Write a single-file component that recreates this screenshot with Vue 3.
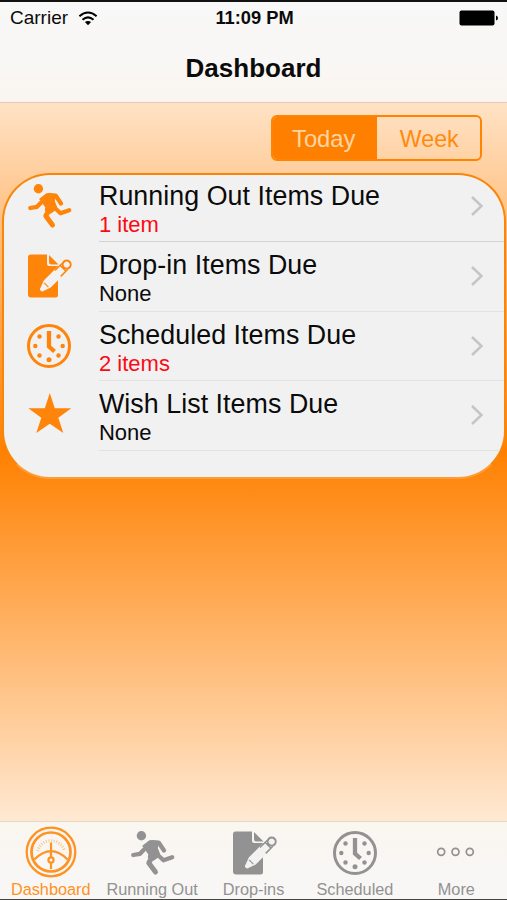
<script setup>
import { ref } from 'vue';

const range = ref('Today');
const activeTab = ref('Dashboard');

const items = [
  { title: 'Running Out Items Due', detail: '1 item', due: true, icon: 'run' },
  { title: 'Drop-in Items Due', detail: 'None', due: false, icon: 'note' },
  { title: 'Scheduled Items Due', detail: '2 items', due: true, icon: 'clock' },
  { title: 'Wish List Items Due', detail: 'None', due: false, icon: 'star' },
];

const tabs = [
  { name: 'Dashboard', icon: 'gauge' },
  { name: 'Running Out', icon: 'run' },
  { name: 'Drop-ins', icon: 'note' },
  { name: 'Scheduled', icon: 'clock' },
  { name: 'More', icon: 'more' },
];
</script>

<template>
  <div class="screen">
    <svg class="symbols" aria-hidden="true">
      <symbol id="run" viewBox="0 0 48 48">
        <circle cx="13.4" cy="6.7" r="4.7" fill="currentColor" />
        <path d="M15 17 21.5 12 31 12.5 29 19 32 26.5 25.5 31 20.5 28.5 21 25Z" fill="currentColor" stroke="currentColor" stroke-width="1.4" stroke-linejoin="round" />
        <g fill="none" stroke="currentColor" stroke-width="4.3" stroke-linecap="round" stroke-linejoin="round">
          <path d="M24 13.2 31 14 36 21.5" />
          <path d="M15.6 21 12 24.8 5.2 26" />
          <path d="M24 28 20.8 34 27.5 43" stroke-width="5" />
          <path d="M32 28 35.5 31.3 44.2 28.3" />
        </g>
      </symbol>
      <symbol id="note" viewBox="0 0 48 48">
        <path d="M5.5 2.5H22V11.5Q22 14 24.5 14H33V43Q33 45.5 30.5 45.5H6Q3 45.5 3 42.5V5.5Q3 2.5 5.5 2.5Z" fill="currentColor" />
        <path d="M24 3 33.5 12.5H26Q24 12.5 24 10Z" fill="currentColor" />
        <g transform="translate(18 36.3) rotate(-45)">
          <path d="M-1-2.3 6-4.9H34A4.9 4.9 0 0 1 34 4.9H6L-1 2.3A2.3 2.3 0 0 1-1-2.3Z" fill="#f3f2f1" />
          <path d="M21-4.1H31M21 4.1H31M28.3-3.6V3.6" fill="none" stroke="currentColor" stroke-width="1.5" />
          <path d="M4.6-3V3" fill="none" stroke="currentColor" stroke-width="1.1" />
          <circle cx="33.5" r="4" fill="#f3f2f1" stroke="currentColor" stroke-width="2" />
        </g>
      </symbol>
      <symbol id="clock" viewBox="0 0 48 48">
        <circle cx="24" cy="24" r="20.5" fill="none" stroke="currentColor" stroke-width="3" />
        <path d="M24 9V24.5L29.5 29.5" fill="none" stroke="currentColor" stroke-width="4.3" />
        <g fill="currentColor">
          <circle cx="14.5" cy="14.5" r="2.2" />
          <circle cx="33.5" cy="14.5" r="2.2" />
          <circle cx="10.3" cy="24" r="2.2" />
          <circle cx="37.7" cy="24" r="2.2" />
          <circle cx="14.5" cy="33.5" r="2.2" />
          <circle cx="33.5" cy="33.5" r="2.2" />
          <circle cx="24" cy="37.7" r="2.5" />
        </g>
      </symbol>
      <symbol id="star" viewBox="0 0 48 48">
        <path d="M24.8 2 29.8 17.3H46.3L33.3 26.8 38.3 42 24.8 32.8 11.3 42 16.3 26.8 3.3 17.3H19.8Z" fill="currentColor" />
      </symbol>
      <symbol id="gauge" viewBox="0 0 52 52">
        <g fill="none" stroke="currentColor">
          <circle cx="26" cy="26" r="24.3" stroke-width="2.3" />
          <circle cx="26" cy="26" r="19.5" stroke-width="2.7" />
          <path d="M9.5 33.5Q26 17 42.5 33.5" stroke-width="2.2" />
          <path d="M12.5 25A14 14 0 0 1 39.5 25" stroke-width="3" stroke-dasharray="1.1 1.5" opacity=".45" />
          <path d="M26 16.5V43" stroke-width="2.2" />
          <circle cx="26" cy="34" r="2.6" fill="#f9f7f4" stroke-width="2.2" />
        </g>
      </symbol>
      <symbol id="more" viewBox="0 0 48 48">
        <g fill="none" stroke="currentColor" stroke-width="1.7">
          <circle cx="9.2" cy="22.8" r="3.5" />
          <circle cx="23.5" cy="22.8" r="3.5" />
          <circle cx="37.8" cy="22.8" r="3.5" />
        </g>
      </symbol>
    </svg>

    <header class="header">
      <div class="status">
        <div class="status__carrier">
          <span>Carrier</span>
          <svg class="status__wifi" viewBox="0 0 20 15">
            <path d="M1.4 5.2Q10-2.2 18.6 5.2M4.5 8.7Q10 4.2 15.5 8.7" fill="none" stroke="#000" stroke-width="2.1" />
            <path d="M6.9 11.1Q10 8.7 13.1 11.1L10 14.3Z" />
          </svg>
        </div>
        <span class="status__time">11:09 PM</span>
        <div class="status__power">
          <svg class="status__battery" viewBox="0 0 40 16">
            <rect x=".5" y=".5" width="35" height="15" rx="2" />
            <path d="M37 5.5Q39 6 39 8T37 10.5Z" />
          </svg>
        </div>
      </div>
      <h1 class="header__title">Dashboard</h1>
    </header>

    <main class="content">
      <div class="segment">
        <button
          v-for="option in ['Today', 'Week']"
          :key="option"
          class="segment__button"
          :class="range === option ? 'segment__button--active' : ''"
          @click="range = option"
        >
          {{ option }}
        </button>
      </div>

      <ul class="card">
        <li v-for="item in items" :key="item.title" class="row">
          <svg class="row__icon"><use :href="'#' + item.icon" /></svg>
          <div class="row__main">
            <div class="row__text">
              <p class="row__title">{{ item.title }}</p>
              <p class="row__detail" :class="item.due ? 'row__detail--due' : ''">
                {{ item.detail }}
              </p>
            </div>
            <svg class="row__chevron" viewBox="0 0 14 22">
              <path d="M2 2 11.5 11 2 20" fill="none" stroke="#c5c5c7" stroke-width="2.5" />
            </svg>
          </div>
        </li>
      </ul>
    </main>

    <nav class="tabs">
      <a
        v-for="tab in tabs"
        :key="tab.name"
        class="tab"
        :class="activeTab === tab.name ? 'tab--active' : ''"
        @click="activeTab = tab.name"
      >
        <svg class="tab__icon" :class="'tab__icon--' + tab.icon">
          <use :href="'#' + tab.icon" />
        </svg>
        <span class="tab__label">{{ tab.name }}</span>
      </a>
    </nav>
  </div>
</template>

<style>
body {
  margin: 0;
}
</style>

<style scoped>
.screen {
  display: flex;
  flex-direction: column;
  box-sizing: border-box;
  width: 100%;
  height: 900px;
  overflow: hidden;
  border-top: 2px solid #111111;
  border-bottom: 1px solid #444444;
  background: linear-gradient(#ffffff, #ff8000 50%, #ffffff);
  font-family: "Liberation Sans", Arial, sans-serif;
  color: #0b0b0b;
}

.symbols {
  display: block;
  width: 0;
  height: 0;
}

.header {
  box-sizing: border-box;
  height: 101px;
  border-bottom: 1px solid #e3ccb7;
  background: linear-gradient(#f8f8f8, #f9f7f5 60%, #faf5ef);
}

.status {
  display: grid;
  grid-template-columns: 1fr auto 1fr;
  align-items: center;
  height: 32px;
  padding: 0 8px 0 10px;
  font-size: 19px;
}

.status__carrier {
  display: flex;
  align-items: center;
  gap: 10px;
}

.status__wifi {
  width: 20px;
  height: 15px;
}

.status__time {
  font-size: 18.3px;
  font-weight: bold;
}

.status__power {
  display: flex;
  justify-content: flex-end;
}

.status__battery {
  width: 40px;
  height: 16px;
}

.header__title {
  margin: 19px 0 0;
  text-align: center;
  font-size: 26px;
  line-height: 30px;
}

.content {
  flex-grow: 1;
}

.segment {
  display: flex;
  box-sizing: border-box;
  width: 211px;
  height: 46px;
  margin: 12px 25px 12px auto;
  overflow: hidden;
  border: 2px solid #ff8400;
  border-radius: 6px;
}

.segment__button {
  flex: 1;
  padding: 2px 0 0 2px;
  border: 0;
  background: none;
  color: #ff8a0c;
  font-family: inherit;
  font-size: 23.2px;
  cursor: pointer;
}

.segment__button--active {
  padding: 1px 2px 0 0;
  background: #ff8000;
  color: #ffd5a2;
  font-size: 23.8px;
}

.card {
  box-sizing: border-box;
  height: 306px;
  margin: 0 1px 0 2px;
  padding: 0;
  overflow: hidden;
  border: 2px solid #f98609;
  border-bottom-color: #ff9c35;
  border-radius: 48px;
  background: #f1f1f1;
  list-style: none;
}

.row {
  display: flex;
  height: 69.6px;
}

.row:first-child {
  height: 67px;
}

.row:first-child .row__main {
  border-bottom-color: #d2d2d2;
}

.row:first-child .row__text {
  padding-top: 5.5px;
}

.row:first-child .row__chevron {
  margin-top: 20px;
}

.row:first-child .row__icon {
  margin-top: 7px;
}

.row__icon {
  width: 48px;
  height: 48px;
  margin: 10px 0 0 21.3px;
  color: #ff840a;
}

.row__main {
  display: flex;
  box-sizing: border-box;
  flex-grow: 1;
  justify-content: space-between;
  margin-left: 25.7px;
  padding-right: 20px;
  border-bottom: 1px solid #e2e2e2;
}

.row__text {
  padding-top: 8px;
}

.row__title,
.row__detail {
  margin: 0;
  white-space: nowrap;
}

.row__title {
  font-size: 26.8px;
  letter-spacing: 0.05px;
  line-height: 31px;
}

.row__detail {
  font-size: 22px;
  line-height: 26.5px;
}

.row__detail--due {
  color: #fb0a14;
}

.row__chevron {
  width: 14px;
  height: 22px;
  margin-top: 23px;
}

.tabs {
  display: flex;
  box-sizing: border-box;
  height: 78px;
  border-top: 1px solid #e8d5c2;
  background: linear-gradient(#faf6f0, #f8f7f6);
}

.tab {
  display: flex;
  flex: 1;
  flex-direction: column;
  align-items: center;
  color: #929292;
  cursor: pointer;
}

.tab--active {
  color: #ff9224;
}

.tab__icon {
  width: 48px;
  height: 48px;
  margin: 7px 0 3px;
}

.tab__icon--gauge {
  width: 52px;
  height: 52px;
  margin: 4px 0 2px;
}

.tab__label {
  font-size: 16.3px;
  line-height: 18px;
  white-space: nowrap;
}
</style>
